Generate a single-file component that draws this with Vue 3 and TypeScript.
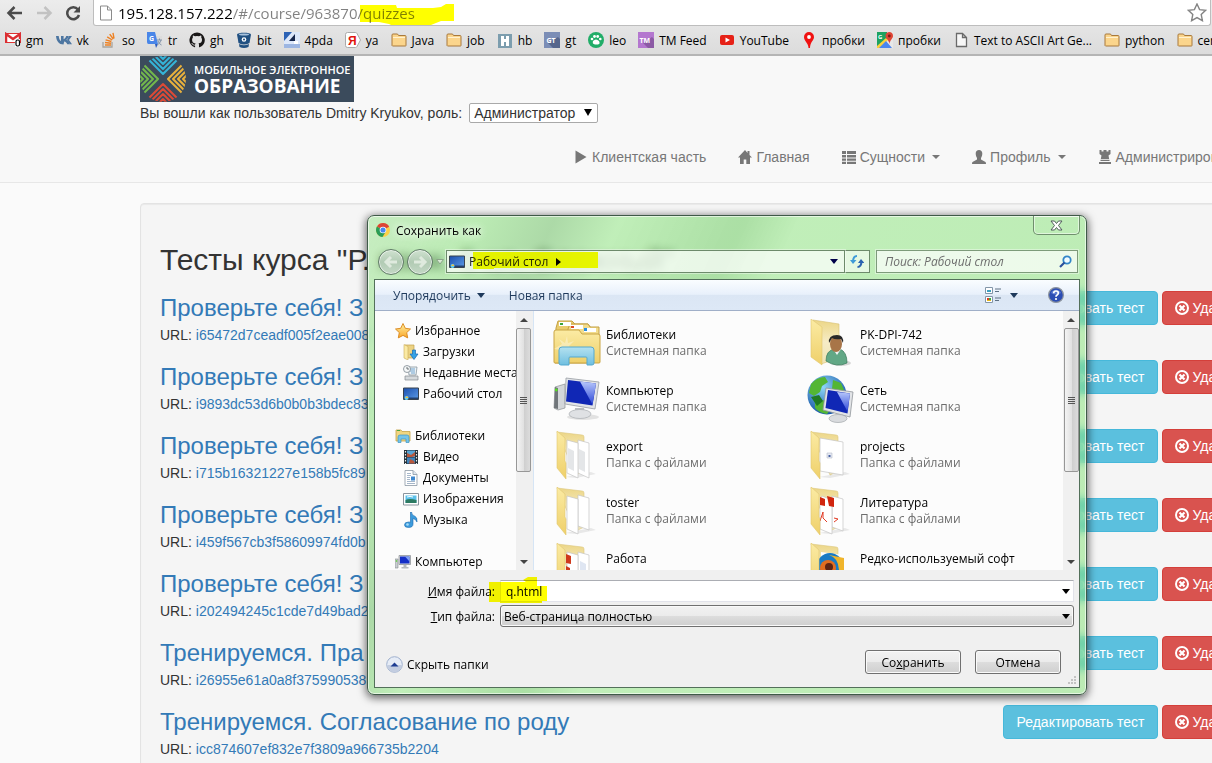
<script setup lang="ts">
import { ref } from 'vue'

interface Glyph { box: string; body: string }

const folderOpen = (inner: string) =>
  `<path d="M4 1l25 3q2 0 2 2v34l-8 4z" fill="url(#gFold2)" stroke="#dcc67c" stroke-width=".6"/>
   <path d="M12 46l26-5 5 2-20 4z" fill="#000" opacity=".08"/>${inner}
   <path d="M4 0l8 7v23l1 2v16L4 37z" fill="url(#gFold)" stroke="#e0c870" stroke-width=".6"/>`
const paper = (x: number) =>
  `<path d="M${x} 9l11 3v35l-11-5z" fill="#fff" stroke="#c4c4c4" stroke-width=".7"/>`

const glyphs: Record<string, Glyph> = {
  gm: { box: '0 0 16 16', body: '<path fill="#fff" stroke="#d33" d="M.5 1.500h15v9h-15z"/><path d="M1 11V2l7 5 7-5v9" fill="none" stroke="#db2f33" stroke-width="2.500"/><path d="M10 7h5v8h-5z" fill="#fff"/><rect x="11" y="8" width="3.500" height="6" rx="1.500" fill="none" stroke="#000" stroke-width="1.200"/>' },
  vk: { box: '0 0 16 16', body: '<path fill="#4d76a1" d="M7.500 12.500C3 12.500.5 9.500 0 4h2.700c.3 3 1.300 4.600 2.300 5V4h2.600v3.200C8.800 7 9.700 5.600 10.200 4h2.600c-.4 1.700-1.400 3-2.400 3.700 1.200.6 2.500 2 3.600 4.600h-2.800c-.5-1.500-1.500-2.600-3-2.800z"/><path d="M13 4h3l-3 4 3 4.300h-2L11 8z" fill="#4d76a1"/>' },
  so: { box: '0 0 16 16', body: '<path d="M2 10v5h9v-5" fill="none" stroke="#a9a49c" stroke-width="1.300"/><g stroke="#ee8122" stroke-width="1.400"><path d="M4 13h6M4 10.500l6 .7M4.600 7.800l5.800 1.700M6.200 4.800l5 3.200M8.700 2.200l3.600 4.800M12 .8l1 5.700"/></g>' },
  tr: { box: '0 0 16 16', body: '<path d="M6 4h9v11H9z" fill="#dcdcdc"/><path d="M0 0h8l3 12H1.500Q0 12 0 10z" fill="#4a86e8"/><path d="M8 12h3l-2 4z" fill="#2c5cc0"/><text x="2" y="8.500" font-size="7" font-weight="bold" font-family="Open Sans" fill="#fff">G</text><path d="M10 8h5M12.500 6.500V8M14 8q-1 4-4 5M11 9q1 3 3.500 4" stroke="#8394aa" fill="none"/>' },
  gh: { box: '0 0 16 16', body: '<path fill="#191717" d="M8 .5a7.600 7.600 0 0 0-2.400 14.800c.4 0 .5-.2.5-.4v-1.400C4 14 3.500 12.600 3.500 12.600c-.4-.9-.9-1.100-.9-1.100-.7-.5 0-.5 0-.5.8 0 1.200.8 1.200.8.7 1.200 1.800.8 2.300.6 0-.5.3-.8.5-1-1.700-.2-3.500-.8-3.500-3.700 0-.9.3-1.500.8-2.100 0-.2-.3-1 .1-2.100 0 0 .7-.2 2.100.8a7 7 0 0 1 3.900 0c1.500-1 2.100-.8 2.100-.8.5 1.100.2 1.900.1 2.100.5.6.8 1.200.8 2.100 0 2.900-1.800 3.500-3.500 3.700.3.200.5.7.5 1.400v2.100c0 .2.200.4.6.4A7.600 7.600 0 0 0 8 .5z"/>' },
  bit: { box: '0 0 16 16', body: '<path fill="#205081" d="M1 2.500C1 0 15 0 15 2.500L13.500 11Q8 14 2.500 11z"/><ellipse cx="8" cy="2.500" rx="5" ry="1" fill="#a9c3dd"/><circle cx="8" cy="7.500" r="2.300" fill="#fff"/><circle cx="8" cy="7.500" r="1" fill="#205081"/><path d="M3 12q5 2.500 10 0l-.5 3q-4.500 2-9 0z" fill="#205081"/>' },
  pda: { box: '0 0 16 16', body: '<path d="M0 0h16v16H0z" fill="#dde8fa"/><path d="M0 0h8L0 9z" fill="#2c62b5"/><path d="M5 9L11 2v7z" fill="#16264c"/><path d="M0 12h16v4H0z" fill="#9db6e2"/><path d="M10 9h4v3h-4z" fill="#fff"/>' },
  ya: { box: '0 0 16 16', body: '<path d="M.5 2.500q0-2 2-2h8q1 0 1.500 1l3.500 6.500-3.500 6.500q-.5 1-1.500 1h-8q-2 0-2-2z" fill="#fff" stroke="#aaa"/><text x="3" y="12.500" font-size="12" font-weight="bold" font-family="Liberation Sans" fill="#e0140c">Я</text>' },
  folder: { box: '0 0 16 16', body: '<path d="M1 13.500V3q0-1 1-1h4.500l1 1.500H14q1 0 1 1v9q0 .5-.5.5h-13z" fill="#fbd58c" stroke="#a8793c"/><path d="M2 5.500h12" stroke="#fff1cf"/>' },
  hb: { box: '0 0 16 16', body: '<path d="M1 2h14v14H1z" fill="#7c9dae"/><path d="M4 4h3v3h2V4h3v10H9v-4H7v4H4z" fill="#fff"/>' },
  gt: { box: '0 0 16 16', body: '<path d="M0 0h16v16H0z" fill="#7b8db6"/><path d="M4 11l10-6 2 2v9H9z" fill="#56668c"/><text x="2.500" y="10.500" font-size="7" font-weight="bold" font-family="Open Sans" fill="#fff">GT</text>' },
  leo: { box: '0 0 16 16', body: '<circle cx="8" cy="8" r="8" fill="#21ad68"/><g fill="#fff"><path d="M5 9q3-3 6 0 1.500 3-1 3.500H7Q4 12 5 9z"/><circle cx="4" cy="7" r="1.300"/><circle cx="6.500" cy="4.500" r="1.400"/><circle cx="9.700" cy="4.500" r="1.400"/><circle cx="12.300" cy="7" r="1.300"/></g>' },
  tm: { box: '0 0 16 16', body: '<path d="M0 0h16v16H0z" fill="#b477cf"/><path d="M5 11l9-6 2 2v9h-6z" fill="#8c5aa5"/><text x="1.500" y="10.500" font-size="7" font-weight="bold" font-family="Open Sans" fill="#fff">TM</text>' },
  yt: { box: '0 0 16 16', body: '<rect x="1" y="3" width="14" height="10" rx="2" fill="#e62117"/><path d="M6.500 5.500v5L11 8z" fill="#fff"/>' },
  pin: { box: '0 0 16 16', body: '<path d="M8 0a5 5 0 0 1 5 5c0 3.500-4 5-4 11H7.500C7.500 11 3 9 3 5a5 5 0 0 1 5-5z" fill="#f01212"/><circle cx="8" cy="5" r="1.900" fill="#fff"/>' },
  maps: { box: '0 0 16 16', body: '<path d="M0 0h16v16H0z" fill="#e8e8e8"/><path d="M0 0h10L10 7 0 15z" fill="#1da261"/><path d="M0 14L9 6l2 2-8 8H0z" fill="#fbd03c"/><path d="M2 16l7-7 6 7z" fill="#4a86f0"/><text x="1" y="6.500" font-size="6" font-weight="bold" font-family="Open Sans" fill="#fff">G</text><path d="M12 0a4 4 0 0 1 4 4c0 2.500-3 4-3.500 8C12 8 8.500 6.500 8.500 4A4 4 0 0 1 12 0z" fill="#de4535"/><circle cx="12.300" cy="4" r="1.400" fill="#7c1d14"/>' },
  page: { box: '0 0 16 16', body: '<path d="M3.500 1.500h6l4 4v9h-10zM9.500 1.500v4h4" fill="#f7f7f7" stroke="#6a6a6a" stroke-width="1.300"/>' },
  star: { box: '0 0 16 16', body: '<path d="M8 .5l2.300 4.800 5.200.7-3.800 3.600 1 5.300L8 12.400l-4.700 2.500 1-5.300L.5 6l5.200-.7z" fill="url(#gStar)" stroke="#d98519" stroke-width=".9"/>' },
  downloads: { box: '0 0 16 16', body: '<path d="M2 1h9v13H2z" fill="#ecd283" stroke="#c2a04c" stroke-width=".7"/><path d="M1 .5l4 2V16l-4-2z" fill="#fbeaa4" stroke="#c9ab58" stroke-width=".6"/><path d="M9.500 6h3v4H15l-4 5.500L7 10h2.500z" fill="#35a2e6" stroke="#1769b0" stroke-width=".7"/>' },
  recent: { box: '0 0 16 16', body: '<path d="M5 2h9l-1 8H6z" fill="#eef3f6" stroke="#8795a0" stroke-width=".8"/><path d="M7 4h5M7 6h5M8 8h4" stroke="#6fa3cf"/><path d="M2 11h13v4H2z" fill="#d5d9dc" stroke="#858b90" stroke-width=".7"/><circle cx="4" cy="4" r="3.500" fill="#f6f8f9" stroke="#7e8890" stroke-width=".8"/><path d="M4 2v2h2" fill="none" stroke="#4b5359" stroke-width=".8"/>' },
  desktop: { box: '0 0 16 16', body: '<path d="M.5 2h15v11.500H.5z" fill="url(#gDesk)" stroke="#39434f"/><path d="M1 11.500h14V13H1z" fill="#23406d"/><circle cx="3.500" cy="12" r="2" fill="#5fd0f5"/><path d="M2 12l2-2 1.500 2z" fill="#f2bd3b"/>' },
  library: { box: '0 0 16 16', body: '<path d="M1 2h5l1 1.500h8V13H1z" fill="#f1d680" stroke="#c7a245" stroke-width=".8"/><path d="M2 2.500h3" stroke="#4aa43c"/><path d="M3 9q0-2 2-2h7q2 0 2 2v5.500h-3V11H6v3.500H3z" fill="#76c4e8" stroke="#3d97c4" stroke-width=".7"/>' },
  video: { box: '0 0 16 16', body: '<path d="M1 1h14v14H1z" fill="#243038"/><path d="M4 1.500h8V8H4z" fill="#57a5d6"/><path d="M4 8.500h8v6H4z" fill="#3f83bb"/><path d="M4 4l4 2 4-3v4l-3 1H4zM7 10l4 2 1 2.500H6z" fill="#b8573b"/><path d="M2.500 2v13M13.500 2v13" stroke="#e7edf0" stroke-width="1.200" stroke-dasharray="1.500 1.500"/>' },
  docs: { box: '0 0 16 16', body: '<path d="M2 .5h8l4 4v11H2z" fill="#fff" stroke="#8b98a5" stroke-width=".8"/><path d="M10 .5v4h4" fill="#dce5ee" stroke="#8b98a5" stroke-width=".8"/><path d="M4 3.500h4M4 5.500h4M4 7.500h3M4 9.500h3M4 11.500h8M4 13.500h8" stroke="#8fa5bd" stroke-width=".8"/><path d="M8 6.500h4v4H8z" fill="#3f88cf"/>' },
  pics: { box: '0 0 16 16', body: '<path d="M.5 2.500h15v11.500H.5z" fill="#fff" stroke="#8a949d"/><path d="M2.500 4.500h11v7.500h-11z" fill="#5bc0ea"/><path d="M2.500 9q4-2 11 0v3h-11z" fill="#2c7a62"/><path d="M4 6q3-1 6 0" stroke="#fff" fill="none"/>' },
  music: { box: '0 0 16 16', body: '<path d="M8.500 0q0 3 3 4t2.500 6q-1-3-4-3.500V12q0 3.500-4.500 3.500Q1.500 15.500 1.500 13q0-3 4-3 1.500 0 2 .3V0z" fill="#3c9bdc" stroke="#1b6aae" stroke-width=".6"/><circle cx="4.500" cy="12.500" r="1.300" fill="#a7dcf7"/>' },
  pc: { box: '0 0 16 16', body: '<path d="M0 5h3v9H0z" fill="#c9cdd1" stroke="#85898d" stroke-width=".6"/><circle cx="1.500" cy="7" r=".8" fill="#4ad01f"/><path d="M4 1.500h11.500v9H4z" fill="#d6d9dd" stroke="#868b91" stroke-width=".7"/><path d="M5 2.500h9.500v7H5z" fill="#1630c8"/><path d="M10 2.500h4.500v5z" fill="#7fa0f4"/><path d="M8.500 11h3v2h2v1.500h-7V13h2z" fill="#b6babf"/>' },
  bigLib: { box: '0 0 48 48', body: '<path d="M3 9l2-7h14l3 3h13l3 4v35H2z" fill="#e9cc6c" stroke="#c3a044"/><path d="M15 10l2-5h18l2 3h9v10H15z" fill="#f2dc8c" stroke="#c3a044"/><path d="M6 3h12v4H6z" fill="#fff"/><path d="M18 6h12v4H18z" fill="#fff"/><path d="M31 9h12v4H31z" fill="#fff"/><path d="M7 4h3v2H7z" fill="#3ba43b"/><path d="M18 7h3v2h-3z" fill="#dc4a22"/><path d="M1 13q0-2 2-2h23l3 4h16q2 0 2 2v26q0 1-1 1H2q-1 0-1-1z" fill="url(#gFold)" stroke="#caa544"/><path d="M31 9h12v4H32z" fill="#fff"/><path d="M31 9h3v3h-3z" fill="#2a8ee0"/><path d="M1 30l8-5-3-5 6 4 2-7 1 7 6-2-5 5 5 6z" fill="#fff" opacity=".35"/><path d="M6 31q0-3 3-3h29q3 0 3 3v13q0 2-2 2h-5v-7q0-1-1-1H17q-1 0-1 1v7H8q-2 0-2-2z" fill="url(#gClip)" stroke="#55a9cf"/>' },
  bigPc: { box: '0 0 48 48', body: '<ellipse cx="30" cy="42" rx="16" ry="3" fill="#000" opacity=".1"/><path d="M2 12l10-3v24L5 35l-4-2z" fill="#d3d6d9" stroke="#8c9094" stroke-width=".7"/><path d="M2 12l3 1v21l-4-1z" fill="#70757a"/><circle cx="3.300" cy="15" r="1.400" fill="#55e020"/><path d="M22 33h9l1 6H22z" fill="#b9bcc0"/><ellipse cx="27" cy="39" rx="11" ry="4.500" fill="#dfe1e4" stroke="#a9adb2" stroke-width=".7"/><path d="M13 3l33 4-4 27-30-5z" fill="#e2e4e7" stroke="#989da3" stroke-width=".8"/><path d="M15 5l28 3.500-3.500 22L13 26.500z" fill="#1027b5"/><path d="M27 6.500l16 2-3.500 21z" fill="url(#gShine)"/>' },
  bigUser: { box: '0 0 48 48', body: '<path d="M6 1l26 4v34l-18 6z" fill="url(#gFold2)" stroke="#d6bf72" stroke-width=".6"/><path d="M4 0l11 8v38L4 38z" fill="url(#gFold)" stroke="#e0c870" stroke-width=".6"/><ellipse cx="34" cy="44" rx="10" ry="3" fill="#000" opacity=".15"/><path d="M19 42q0-11 9-12h5q7 3 7 14-10 5-21-2z" fill="#62a886" stroke="#3a7a5a" stroke-width=".7"/><path d="M26 30l4 6 4-6z" fill="#f4f4f4"/><ellipse cx="29" cy="25" rx="6" ry="8" fill="#a87548"/><path d="M22 24q-1-8 8-8 7 0 6 8l-2-4q-6 1-9-1z" fill="#282828"/>' },
  bigNet: { box: '0 0 48 48', body: '<circle cx="20" cy="20" r="19.500" fill="url(#gGlobe)"/><path d="M4 9q6-7 14-7l3 5-6 4-2 6-6 4-5-3zM26 5l8 3 3 7-5 3-7-4zM8 27l10-2 7 8-5 6q-8-1-12-6z" fill="#53b634"/><path d="M4 22l8-2 4 6-6 5z" fill="#1f7a24"/><path d="M19 13l27 4-3 25-27-7z" fill="#e2e4e7" stroke="#90959b" stroke-width=".8"/><path d="M21 15l22 3.500-2.500 20L18.500 33z" fill="#1027b5"/><path d="M30 17l13 1.500-2.500 18z" fill="url(#gShine)"/><ellipse cx="31" cy="43.500" rx="9" ry="4" fill="#d9dbde" stroke="#a2a6ab" stroke-width=".7"/>' },
  bigExport: { box: '0 0 48 48', body: folderOpen(paper(25) + '<path d="M26 18l6 3v20l-6-3z" fill="#e4e6e8"/>' + paper(14) + '<path d="M15 17l6 3v20l-6-3z" fill="#e4e6e8"/>') },
  bigPages: { box: '0 0 48 48', body: folderOpen('<path d="M25 8l11 3v32l-11-4z" fill="#fff" stroke="#c4c4c4" stroke-width=".7"/>' + paper(14)) },
  bigProj: { box: '0 0 48 48', body: folderOpen('<path d="M13 7l23 4v33l-23-4z" fill="#fff" stroke="#c4c4c4" stroke-width=".7"/><path d="M20 22h5v5h-5z" fill="#e6e9f2" stroke="#b5bccb" stroke-width=".6"/><path d="M21.500 24h2v2h-2z" fill="#4661a3"/>') },
  bigPdf: { box: '0 0 48 48', body: folderOpen('<path d="M25 9l11 3v32l-11-4z" fill="#fff" stroke="#c4c4c4" stroke-width=".7"/><path d="M13 12l2-3 10 4v34l-12-5z" fill="#fff" stroke="#c4c4c4" stroke-width=".7"/><path d="M20 9l7 2v9l-5-1zM13 10l5 2v7l-5-1z" fill="#d1260f"/><path d="M13 34l3-9v6l4 4M27 31l4 1-4 3" fill="none" stroke="#e23c26"/>') },
  bigWork: { box: '0 0 48 48', body: folderOpen(paper(25) + paper(14) + '<path d="M13 11l5 2v8l-5-1zM13 23l4 2v6h-4z" fill="#cf3a1c"/><path d="M27 18l6 3v20h-6z" fill="#dfe6f2"/>') },
  bigSoft: { box: '0 0 48 48', body: folderOpen('<path d="M14 9l22 3v34H14z" fill="#fff"/><circle cx="23" cy="23" r="13" fill="#1a7bc4"/><path d="M22 12q11 3 10 20h5V15z" fill="#f0b52c"/><circle cx="21" cy="25" r="8" fill="#e26d1f"/><circle cx="22" cy="24" r="4" fill="#5f2413"/>') },
  play: { box: '0 0 14 14', body: '<path d="M1.500.5v13l11-6.500z" fill="#777"/>' },
  home: { box: '0 0 14 14', body: '<path d="M7 0L0 7.500h2V14h3.700V9.500h2.600V14H12V7.500h2L11.500 5V1h-2v2z" fill="#777"/>' },
  list: { box: '0 0 14 14', body: '<path d="M0 1h4v3H0zM5 1h9v3H5zM0 5h4v2.500H0zM5 5h9v2.500H5zM0 8.500h4v2.300H0zM5 8.500h9v2.300H5zM0 11.800h4V14H0zM5 11.800h9V14H5z" fill="#777"/>' },
  user: { box: '0 0 14 14', body: '<path d="M7 0c2 0 3.300 1.300 3.300 3.500S9.500 7 9 8v1.500l4.500 2.500q.5.500.5 2H0q0-1.500.5-2L5 9.500V8C4.500 7 3.700 5.700 3.700 3.500S5 0 7 0z" fill="#777"/>' },
  tower: { box: '0 0 14 14', body: '<path d="M1.500 0h2v1.500h2V0h3v1.500h2V0h2v4l-2 1.500.7 3.500H2.800l.7-3.500-2-1.500zM2.500 9.700h9v1.200h-9zM1 12h12v2H1z" fill="#777"/>' },
}

interface Bookmark { icon: string; label: string }
const bookmarks: Bookmark[] = [
  { icon: 'gm', label: 'gm' }, { icon: 'vk', label: 'vk' }, { icon: 'so', label: 'so' },
  { icon: 'tr', label: 'tr' }, { icon: 'gh', label: 'gh' }, { icon: 'bit', label: 'bit' },
  { icon: 'pda', label: '4pda' }, { icon: 'ya', label: 'ya' }, { icon: 'folder', label: 'Java' },
  { icon: 'folder', label: 'job' }, { icon: 'hb', label: 'hb' }, { icon: 'gt', label: 'gt' },
  { icon: 'leo', label: 'leo' }, { icon: 'tm', label: 'TM Feed' }, { icon: 'yt', label: 'YouTube' },
  { icon: 'pin', label: 'пробки' }, { icon: 'maps', label: 'пробки' },
  { icon: 'page', label: 'Text to ASCII Art Ge...' }, { icon: 'folder', label: 'python' },
  { icon: 'folder', label: 'centos' },
]

const menu = [
  { icon: 'play', label: 'Клиентская часть', drop: false },
  { icon: 'home', label: 'Главная', drop: false },
  { icon: 'list', label: 'Сущности', drop: true },
  { icon: 'user', label: 'Профиль', drop: true },
  { icon: 'tower', label: 'Администрирование', drop: true },
]

const quizzes = [
  { title: 'Проверьте себя! З', url: 'i65472d7ceadf005f2eae008' },
  { title: 'Проверьте себя! З', url: 'i9893dc53d6b0b0b3bdec83' },
  { title: 'Проверьте себя! З', url: 'i715b16321227e158b5fc89' },
  { title: 'Проверьте себя! З', url: 'i459f567cb3f58609974fd0b' },
  { title: 'Проверьте себя! З', url: 'i202494245c1cde7d49bad2' },
  { title: 'Тренируемся. Пра', url: 'i26955e61a0a8f375990538' },
  { title: 'Тренируемся. Согласование по роду', url: 'icc874607ef832e7f3809a966735b2204' },
]

const tree = [
  { icon: 'star', label: 'Избранное', children: [
    { icon: 'downloads', label: 'Загрузки' }, { icon: 'recent', label: 'Недавние места' }, { icon: 'desktop', label: 'Рабочий стол' },
  ] },
  { icon: 'library', label: 'Библиотеки', children: [
    { icon: 'video', label: 'Видео' }, { icon: 'docs', label: 'Документы' }, { icon: 'pics', label: 'Изображения' }, { icon: 'music', label: 'Музыка' },
  ] },
  { icon: 'pc', label: 'Компьютер', children: [] },
]

const files = [
  { icon: 'bigLib', name: 'Библиотеки', kind: 'Системная папка' },
  { icon: 'bigUser', name: 'PK-DPI-742', kind: 'Системная папка' },
  { icon: 'bigPc', name: 'Компьютер', kind: 'Системная папка' },
  { icon: 'bigNet', name: 'Сеть', kind: 'Системная папка' },
  { icon: 'bigExport', name: 'export', kind: 'Папка с файлами' },
  { icon: 'bigProj', name: 'projects', kind: 'Папка с файлами' },
  { icon: 'bigPages', name: 'toster', kind: 'Папка с файлами' },
  { icon: 'bigPdf', name: 'Литература', kind: 'Папка с файлами' },
  { icon: 'bigWork', name: 'Работа', kind: '\u00a0' },
  { icon: 'bigSoft', name: 'Редко-используемый софт', kind: '\u00a0' },
]

const address = ref('195.128.157.222/#/course/963870/quizzes')
const role = ref('Администратор')
const fileName = ref('q.html')
const fileType = ref('Веб-страница полностью')
const search = ref('')
</script>

<template>
  <div class="window">
    <svg class="defs" width="0" height="0" aria-hidden="true">
      <defs>
        <linearGradient id="gFold" x1="0" y1="0" x2="0" y2="1"><stop offset="0" stop-color="#fbeba4" /><stop offset="1" stop-color="#efd06a" /></linearGradient>
        <linearGradient id="gFold2" x1="0" y1="0" x2="0" y2="1"><stop offset="0" stop-color="#ecd686" /><stop offset=".5" stop-color="#f6ecc6" /><stop offset="1" stop-color="#efe3b4" /></linearGradient>
        <linearGradient id="gClip" x1="0" y1="0" x2="0" y2="1"><stop offset="0" stop-color="#b5e2f0" /><stop offset="1" stop-color="#6fbfe0" /></linearGradient>
        <linearGradient id="gShine" x1="0" y1="0" x2="0" y2="1"><stop offset="0" stop-color="#b7c7fb" /><stop offset="1" stop-color="#2d48d8" /></linearGradient>
        <linearGradient id="gDesk" x1="0" y1="0" x2="1" y2="1"><stop offset="0" stop-color="#1b4fae" /><stop offset="1" stop-color="#5b9ae6" /></linearGradient>
        <linearGradient id="gStar" x1="0" y1="0" x2="0" y2="1"><stop offset="0" stop-color="#fff0a0" /><stop offset="1" stop-color="#f9a72b" /></linearGradient>
        <radialGradient id="gGlobe" cx=".4" cy=".3" r=".7"><stop offset="0" stop-color="#8fd6f8" /><stop offset="1" stop-color="#1757a8" /></radialGradient>
        <clipPath id="disc"><circle cx="23" cy="23" r="23" /></clipPath>
      </defs>
    </svg>

    <header class="chrome">
      <div class="toolbar">
        <button class="tool" aria-label="Назад"><svg width="18" height="16" viewBox="0 0 18 16"><path d="M16 8H3M8.500 2L2.500 8l6 6" fill="none" stroke="#4b4b4b" stroke-width="2.500" /></svg></button>
        <button class="tool" aria-label="Вперёд"><svg width="18" height="16" viewBox="0 0 18 16"><path d="M2 8h13M9.500 2l6 6-6 6" fill="none" stroke="#c2c2c2" stroke-width="2.500" /></svg></button>
        <button class="tool" aria-label="Обновить"><svg width="18" height="16" viewBox="0 0 18 16"><path d="M14 4.500A6 6 0 1 0 15 10" fill="none" stroke="#4b4b4b" stroke-width="2.500" /><path d="M16 1v6.500H9.500z" fill="#4b4b4b" /></svg></button>
        <div class="omnibox">
          <svg width="14" height="16" viewBox="0 0 14 16"><path d="M1.500 1h7l4 4v10h-11zM8.500 1v4h4" fill="#fff" stroke="#8b8b8b" /></svg>
          <div class="url">
            <input v-model="address" aria-label="Адрес" spellcheck="false" />
            <svg class="mark mark-url" width="96" height="21" viewBox="0 0 96 21"><path d="M1 1l36 0 1 3h36l8-1 5-3h8v17l-13 0-10 4H32l-2-1-10-2H1z" fill="#ff0" /></svg>
          </div>
          <button class="fav" aria-label="Добавить в закладки"><svg width="20" height="19" viewBox="0 0 20 19"><path d="M10 1l2.600 5.600 6 .7-4.400 4.200 1.200 6.200L10 14.600l-5.400 3.100 1.200-6.200L1.400 7.300l6-.7z" fill="#fff" stroke="#848484" stroke-width="1.400" /></svg></button>
        </div>
      </div>
      <nav class="bookmarks" aria-label="Закладки">
        <a v-for="(b, i) in bookmarks" :key="i" href="#" class="bookmark">
          <svg width="16" height="16" :viewBox="glyphs[b.icon].box" v-html="glyphs[b.icon].body" />
          <span>{{ b.label }}</span>
        </a>
      </nav>
    </header>

    <main class="page">
      <div class="site-head">
        <div class="container">
          <a href="#" class="logo">
            <svg width="46" height="46" viewBox="0 0 46 46">
              <g clip-path="url(#disc)" fill="none" stroke-width="2" stroke-linejoin="round">
                <path d="M9 4l14 14L37 4M9-1l14 14L37-1M13-2l10 10L33-2M18-2l5 5 5-5" stroke="#35b4d8" />
                <path d="M4 9l14 14L4 37M-1 9l14 14L-1 37M-2 13L8 23-2 33M-2 18l5 5-5 5" stroke="#73b84c" />
                <path d="M42 9L28 23l14 14M47 9L33 23l14 14M48 13L38 23l10 10M48 18l-5 5 5 5" stroke="#e9b13c" />
                <path d="M9 42l14-14 14 14M9 47l14-14 14 14M13 48l10-10 10 10M18 48l5-5 5 5" stroke="#dd4a36" />
              </g>
            </svg>
            <span class="logo-text"><small>МОБИЛЬНОЕ ЭЛЕКТРОННОЕ</small><strong>ОБРАЗОВАНИЕ</strong></span>
          </a>
          <div class="login">
            <label for="role">Вы вошли как пользователь Dmitry Kryukov, роль:</label>
            <span class="role">
              <select id="role" v-model="role"><option>Администратор</option></select>
              <svg width="8" height="7" viewBox="0 0 8 7"><path d="M0 0h8L4 7z" fill="#000" /></svg>
            </span>
          </div>
          <nav class="menu" aria-label="Меню">
            <a v-for="m in menu" :key="m.label" href="#">
              <svg width="14" height="14" :viewBox="glyphs[m.icon].box" v-html="glyphs[m.icon].body" />
              <span>{{ m.label }}</span>
              <i v-if="m.drop" class="caret" />
            </a>
          </nav>
        </div>
      </div>
      <section class="container well">
        <h2>Тесты курса "Р. язык. 5 кл. Сложный"</h2>
        <article v-for="q in quizzes" :key="q.url" class="quiz">
          <div>
            <h3><a href="#">{{ q.title }}</a></h3>
            <p>URL: <a href="#">{{ q.url }}</a></p>
          </div>
          <div class="actions">
            <button class="btn info">Редактировать тест</button>
            <button class="btn danger">
              <svg width="14" height="14" viewBox="0 0 14 14"><circle cx="7" cy="7" r="6" fill="none" stroke="#fff" stroke-width="2" /><path d="M4.500 4.500l5 5M9.500 4.500l-5 5" stroke="#fff" stroke-width="2.200" /></svg>
              <span>Удалить</span>
            </button>
          </div>
        </article>
      </section>
    </main>

    <section class="dialog" role="dialog" aria-label="Сохранить как">
      <header class="caption">
        <svg width="14" height="14" viewBox="0 0 14 14"><circle cx="7" cy="7" r="7" fill="#fcd048" /><path d="M7 7L1 3.500a7 7 0 0 1 12.200.2z" fill="#dc4437" /><path d="M7 7L.9 3.600A7 7 0 0 0 6.500 14l3-5z" fill="#2a9d58" /><circle cx="7" cy="7" r="3.300" fill="#fff" /><circle cx="7" cy="7" r="2.600" fill="#4687f0" /></svg>
        <span>Сохранить как</span>
        <button class="close" aria-label="Закрыть"><svg width="13" height="11" viewBox="0 0 13 11"><path d="M1 1h3.500l2 2.500L8.500 1H12L8.500 5.500 12 10H8.500l-2-2.500-2 2.500H1l3.500-4.500z" fill="#fff" stroke="#515c5c" /></svg></button>
      </header>

      <div class="address-row">
        <div class="history">
          <button class="round" aria-label="Назад"><svg width="16" height="14" viewBox="0 0 16 14"><path d="M14 7H3M8 2L3 7l5 5" fill="none" stroke="#dfeade" stroke-width="3" /></svg></button>
          <button class="round" aria-label="Вперёд"><svg width="16" height="14" viewBox="0 0 16 14"><path d="M2 7h11M8 2l5 5-5 5" fill="none" stroke="#dfeade" stroke-width="3" /></svg></button>
          <svg width="8" height="6" viewBox="0 0 8 6"><path d="M.5.5h7L4 5z" fill="#d7e9d3" stroke="#8ba488" /></svg>
        </div>
        <div class="crumbs">
          <svg width="16" height="16" :viewBox="glyphs.desktop.box" v-html="glyphs.desktop.body" />
          <button class="crumb">Рабочий стол</button>
          <svg width="5" height="8" viewBox="0 0 5 8"><path d="M0 0l5 4-5 4z" fill="#000" /></svg>
          <svg class="mark mark-crumb" width="128" height="18" viewBox="0 0 128 18"><path d="M3 1h125v16H24v1H3z" fill="#f8fa00" /></svg>
          <svg class="push" width="8" height="5" viewBox="0 0 8 5"><path d="M0 0h8L4 5z" fill="#00004a" /></svg>
        </div>
        <button class="refresh" aria-label="Обновить"><svg width="14" height="13" viewBox="0 0 14 13"><path d="M7 1Q3 1 3 7" fill="none" stroke="#3f9bd8" stroke-width="2" /><path d="M0 5h6.500L3 9z" fill="#3f9bd8" /><path d="M7.500 12q4 0 4-6" fill="none" stroke="#2b62b0" stroke-width="2" /><path d="M8 8h6.500L11 4z" fill="#2b62b0" /></svg></button>
        <div class="search">
          <input v-model="search" type="text" placeholder="Поиск: Рабочий стол" aria-label="Поиск" />
          <svg width="13" height="13" viewBox="0 0 13 13"><circle cx="8" cy="5" r="3.700" fill="#eefaff" stroke="#3286c8" stroke-width="1.800" /><path d="M5.500 7.500L1 12" stroke="#2a4f9c" stroke-width="2.200" /></svg>
        </div>
      </div>

      <div class="client">
        <div class="commands">
          <button>Упорядочить <svg width="8" height="5" viewBox="0 0 8 5"><path d="M0 0h8L4 5z" fill="#1e395b" /></svg></button>
          <button>Новая папка</button>
          <button class="view" aria-label="Вид">
            <svg width="16" height="16" viewBox="0 0 16 16"><path d="M.5.5h7v6h-7zM.5 9.500h7v6h-7z" fill="#fff" stroke="#8396a8" /><path d="M2 3h4v2H2z" fill="#3e9fc0" /><path d="M2 11h2v2H2z" fill="#e03a1e" /><path d="M4 11h2v2H4z" fill="#39a845" /><path d="M2 13h4v1H2z" fill="#e7b71b" /><path d="M10 2h6M10 4.500h4M10 11h6M10 13.500h4" stroke="#5e7184" /></svg>
            <svg width="8" height="5" viewBox="0 0 8 5"><path d="M0 0h8L4 5z" fill="#1e395b" /></svg>
          </button>
          <button class="help" aria-label="Справка"><svg width="16" height="16" viewBox="0 0 16 16"><circle cx="8" cy="8" r="7.400" fill="#2b4db4" stroke="#8d949e" stroke-width="1.200" /><path d="M3 6a5.500 5.500 0 0 1 10 0q-5 3-10 0z" fill="#7f9ce8" opacity=".6" /><path d="M5.700 6.200Q5.700 4 8 4t2.300 2q0 1.200-1.200 1.900Q8 8.500 8 9.700" fill="none" stroke="#fff" stroke-width="1.700" /><circle cx="8" cy="12" r="1.100" fill="#fff" /></svg></button>
        </div>

        <div class="browse">
          <nav class="tree" aria-label="Папки">
            <div v-for="g in tree" :key="g.label" class="group">
              <a href="#"><svg width="16" height="16" :viewBox="glyphs[g.icon].box" v-html="glyphs[g.icon].body" />{{ g.label }}</a>
              <a v-for="c in g.children" :key="c.label" href="#" class="child"><svg width="16" height="16" :viewBox="glyphs[c.icon].box" v-html="glyphs[c.icon].body" />{{ c.label }}</a>
            </div>
          </nav>
          <div class="scroll divided" aria-hidden="true">
            <span class="arrow up" /><span class="thumb"><i /><i /><i /><i /></span><span class="arrow down" />
          </div>
          <div class="files">
            <a v-for="f in files" :key="f.name" href="#" class="file">
              <svg width="48" height="48" :viewBox="glyphs[f.icon].box" v-html="glyphs[f.icon].body" />
              <span><b>{{ f.name }}</b><em>{{ f.kind }}</em></span>
            </a>
          </div>
          <div class="scroll" aria-hidden="true">
            <span class="arrow up" /><span class="thumb"><i /><i /><i /><i /></span><span class="arrow down" />
          </div>
        </div>

        <form class="form" @submit.prevent>
          <label for="fname"><u>И</u>мя файла:</label>
          <div class="field">
            <input id="fname" v-model="fileName" type="text" spellcheck="false" />
            <svg class="mark mark-name" width="59" height="26" viewBox="0 0 59 26"><path d="M0 5h12l25 0-3-2 5-3h9v9h10v15h-5v2H11v-1H0z" fill="#ff0" /></svg>
            <svg class="drop" width="8" height="5" viewBox="0 0 8 5"><path d="M0 0h8L4 5z" fill="#000" /></svg>
          </div>
          <label for="ftype"><u>Т</u>ип файла:</label>
          <div class="field">
            <select id="ftype" v-model="fileType"><option>Веб-страница полностью</option></select>
            <svg class="drop" width="8" height="5" viewBox="0 0 8 5"><path d="M0 0h8L4 5z" fill="#000" /></svg>
          </div>
        </form>
        <footer class="foot">
          <button class="hide"><svg width="17" height="17" viewBox="0 0 17 17"><circle cx="8.500" cy="8.500" r="7.800" fill="#e6ecf6" stroke="#9fb0cd" /><path d="M1.500 9h14a7 7 0 0 1-14 0z" fill="#c3cde0" /><path d="M4.500 10.500h8l-4-4z" fill="#1d3c91" /></svg>Скрыть папки</button>
          <button class="sys save">Со<u>х</u>ранить</button>
          <button class="sys cancel">Отмена</button>
          <svg class="grip" width="9" height="9" viewBox="0 0 9 9"><path d="M6 0h2v2H6zM3 3h2v2H3zM6 3h2v2H6zM0 6h2v2H0zM3 6h2v2H3zM6 6h2v2H6z" fill="#c3c3c3" /></svg>
        </footer>
      </div>
    </section>
  </div>
</template>

<style>
body { margin: 0; }
</style>

<style scoped>
* { box-sizing: border-box; }
.window { position: relative; height: 100vh; overflow: hidden; display: flex; flex-direction: column; background: #fafafa; font-family: "Liberation Sans", Arial, sans-serif; font-size: 14px; color: #333; }
.defs { position: absolute; }
button, input, select { font: inherit; color: inherit; margin: 0; padding: 0; border: 0; background: none; }
a { color: #337ab7; text-decoration: none; white-space: nowrap; }
svg { flex: none; display: block; }
.mark { position: absolute; mix-blend-mode: multiply; pointer-events: none; }

.chrome { flex: none; background: linear-gradient(#ececec, #dcdcdc); border-bottom: 2px solid #b5b5b5; font-family: "Open Sans", "Noto Sans", sans-serif; font-size: 12px; color: #000; }
.toolbar { display: flex; height: 26px; padding-left: 6px; gap: 11px; }
.tool { width: 18px; display: flex; align-items: center; }
.omnibox { flex: 1; display: flex; align-items: center; margin-right: 1px; padding: 0 3px 0 5px; gap: 5px; background: #fff; border: solid #bdbdbd; border-width: 0 1px 1px; border-radius: 0 0 3px 3px; }
.url { position: relative; flex: 1; isolation: isolate; }
.url input { width: 100%; height: 24px; outline: 0; font-size: 15px; color: transparent; background: linear-gradient(90deg, #000 114px, #808080 114px); background-clip: text; -webkit-background-clip: text; }
.mark-url { left: 241px; top: 3px; }
.bookmarks { display: flex; height: 28px; padding: 0 0 0 5px; gap: 12px; align-items: center; overflow: hidden; }
.bookmark { display: flex; gap: 5px; align-items: center; color: #000; flex: none; }

.page { flex: 1; min-height: 0; overflow: hidden; display: flex; flex-direction: column; }
.container { width: 1140px; margin-left: 140px; flex: none; }
.site-head { background: #f8f8f8; border-bottom: 1px solid #e7e7e7; flex: none; height: 127px; }
.logo { display: flex; width: 214px; height: 46px; background: #3b4b5c; color: #fff; font-family: "Open Sans", sans-serif; overflow: hidden; gap: 8px; }
.logo-text { display: flex; flex-direction: column; padding-top: 6px; }
.logo-text small { font-size: 11px; font-weight: 600; line-height: 15px; }
.logo-text strong { font-size: 19px; line-height: 18px; }
.login { display: flex; align-items: center; gap: 7px; height: 21px; white-space: nowrap; }
.role { position: relative; }
.role select { appearance: none; width: 129px; height: 20px; padding: 0 4px; border: 1px solid #a9a9a9; border-radius: 2px; background: #fff; display: block; }
.role svg { position: absolute; right: 6px; top: 6px; pointer-events: none; }
.menu { display: flex; gap: 32px; height: 68px; align-items: center; padding-left: 434px; }
.menu a { display: flex; align-items: center; gap: 4px; color: #777; }
.caret { border: 4px solid transparent; border-top-color: #777; border-bottom: 0; margin-left: 3px; }
.well { margin-top: 20px; flex: 1; background: #f5f5f5; border: 1px solid #e3e3e3; border-radius: 4px; padding: 39px 20px 0 19px; box-shadow: inset 0 1px 1px rgba(0, 0, 0, .05); }
h2 { margin: 0 0 15px; font-size: 30px; line-height: 33px; font-weight: 400; white-space: nowrap; }
.quiz { display: flex; justify-content: space-between; height: 69px; }
h3 { margin: 4px 0; font-size: 24px; line-height: 26px; font-weight: 400; }
p { margin: 0; line-height: 20px; white-space: nowrap; }
.actions { display: flex; gap: 4px; }
.btn { display: flex; align-items: center; gap: 4px; height: 34px; padding: 0 12px; border-radius: 4px; color: #fff; border: 1px solid; white-space: nowrap; }
.info { background: #5bc0de; border-color: #46b8da; }
.danger { background: #d9534f; border-color: #d43f3a; }

.dialog { position: absolute; left: 367px; top: 215px; width: 720px; padding: 0 6px 6px; border: 1px solid #3f5a48; border-radius: 7px; background: linear-gradient(115deg, rgba(130, 225, 115, .4) 0, rgba(130, 225, 115, .5) 12%, rgba(100, 190, 90, .5) 20%, rgba(140, 232, 125, .5) 27%, rgba(110, 205, 98, .55) 40%, rgba(140, 232, 125, .5) 46%, rgba(130, 225, 115, .5)); backdrop-filter: blur(4px); box-shadow: inset 0 0 0 1px rgba(255, 255, 255, .6), 0 2px 8px 1px rgba(0, 0, 0, .6); font-family: "Open Sans", "Noto Sans", sans-serif; font-size: 12px; color: #000; }
.caption { display: flex; align-items: center; height: 28px; padding-left: 2px; gap: 6px; text-shadow: 0 0 6px #fff, 0 0 8px #fff; }
.close { margin-left: auto; align-self: flex-start; width: 47px; height: 19px; display: flex; justify-content: center; align-items: center; border: 1px solid #6f8f6d; border-top: 0; border-radius: 0 0 5px 5px; box-shadow: inset 0 0 0 1px rgba(255, 255, 255, .5); }
.address-row { display: flex; align-items: center; height: 35px; padding: 0 2px 0 4px; }
.history { display: flex; align-items: center; gap: 3px; width: 68px; }
.round { width: 26px; height: 26px; border-radius: 50%; border: 1px solid #5f7a66; background: linear-gradient(#d0e2d0, #b2cbb4 50%, #c4d8c5); box-shadow: inset 0 0 0 1px rgba(255, 255, 255, .6); display: flex; align-items: center; justify-content: center; }
.crumbs { position: relative; flex: 1; display: flex; align-items: center; height: 23px; padding: 0 6px 0 2px; gap: 4px; background: rgba(255, 255, 255, .72); border: 1px solid #6d8a6b; box-shadow: 0 0 0 1px rgba(255, 255, 255, .4); }
.crumb { margin-right: 4px; color: #222; }
.push { margin-left: auto; }
.mark-crumb { left: 23px; top: 0; }
.refresh { width: 25px; height: 23px; border: 1px solid #6d8a6b; border-left: 0; background: rgba(255, 255, 255, .6); display: flex; align-items: center; justify-content: center; margin-right: 6px; }
.search { width: 202px; height: 23px; display: flex; align-items: center; padding: 0 5px 0 8px; border: 1px solid #7d9b7a; background: rgba(255, 255, 255, .72); box-shadow: 0 0 0 1px rgba(255, 255, 255, .4); }
.search input { flex: 1; min-width: 0; outline: 0; }
.search input::placeholder { color: #6d6d6d; font-style: italic; opacity: 1; }
.client { border: 1px solid #53705a; background: #f0f0f0; }
.commands { display: flex; align-items: center; height: 31px; padding: 0 15px 0 18px; gap: 24px; background: linear-gradient(#fafdff, #e8f0fb 48%, #dbe6f4 50%, #dde8f6); border-bottom: 1px solid #a0afc8; color: #1e395b; }
.commands button { display: flex; align-items: center; gap: 6px; }
.commands .view { margin: 0 6px 0 auto; gap: 9px; }
.browse { display: flex; height: 259px; background: #fcfcfc; overflow: hidden; }
.tree { width: 141px; padding: 9px 0 0 20px; overflow: hidden; flex: none; }
.group { margin-bottom: 21px; }
.tree a { display: flex; align-items: center; gap: 4px; height: 21px; color: #000; }
.tree .child { padding-left: 8px; }
.scroll { width: 16px; flex: none; background: #f0f0f0; display: flex; flex-direction: column; align-items: center; }
.divided { width: 18px; padding-right: 2px; border-right: 1px solid #d6e5f5; }
.arrow { height: 17px; display: flex; align-items: center; }
.arrow::after { content: ""; border: 4px solid transparent; }
.up::after { border-bottom-color: #444; border-top: 0; }
.down::after { border-top-color: #444; border-bottom: 0; }
.down { margin-top: auto; }
.thumb { width: 15px; height: 144px; border: 1px solid #979797; border-radius: 2px; background: linear-gradient(90deg, #f4f4f4, #e2e2e2 50%, #cfcfcf 55%, #dcdcdc); display: flex; flex-direction: column; align-items: center; justify-content: center; gap: 1px; }
.thumb i { width: 7px; height: 1px; background: #555; }
.files { flex: 1; display: grid; grid-template-columns: 254px 1fr; grid-auto-rows: 56px; padding: 4px 0 0 19px; overflow: hidden; }
.file { display: flex; align-items: center; gap: 5px; color: #000; }
.file span { display: flex; flex-direction: column; line-height: 16px; }
.file b, .file em { font-weight: 400; font-style: normal; }
.file em { color: #6d6d6d; }
.form { display: grid; grid-template-columns: 120px 1fr; column-gap: 5px; row-gap: 3px; align-items: center; padding: 10px 5px 0 0; }
.form label { text-align: right; }
.field { position: relative; height: 22px; }
.field input, .field select { appearance: none; width: 100%; height: 100%; outline: 0; display: block; }
.field input { background: #fff; border: 1px solid #e2e3ea; border-top-color: #abadb3; padding-left: 5px; }
.field select { border: 1px solid #707070; border-radius: 3px; padding-left: 3px; background: linear-gradient(#f2f2f2, #ebebeb 50%, #ddd 50%, #cfcfcf); box-shadow: inset 0 0 0 1px #fafafa; }
.drop { position: absolute; right: 4px; top: 9px; pointer-events: none; }
.mark-name { left: -11px; top: -3px; }
.foot { position: relative; display: flex; align-items: center; height: 60px; padding: 10px 18px 0 11px; }
.hide { display: flex; align-items: center; gap: 4px; margin-right: auto; padding-top: 4px; }
.sys { height: 24px; border: 1px solid #707070; border-radius: 3px; background: linear-gradient(#f2f2f2, #ebebeb 50%, #ddd 50%, #cfcfcf); box-shadow: inset 0 0 0 1px #fafafa; }
.save { width: 96px; margin-right: 14px; }
.cancel { width: 86px; }
.grip { position: absolute; right: 2px; bottom: 2px; }
</style>
